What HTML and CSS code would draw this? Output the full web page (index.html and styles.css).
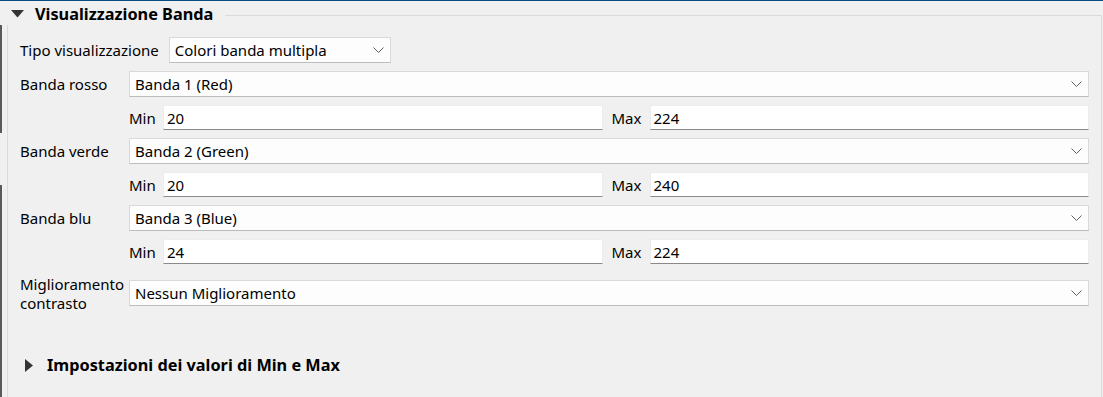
FILE: index.html
```html
<!DOCTYPE html>
<html lang="it">
<head>
  <meta charset="UTF-8" />
  <meta name="viewport" content="width=device-width, initial-scale=1.0" />
  <title>Visualizzazione Banda</title>
  <link rel="stylesheet" href="styles.css">
</head>
<body>
  <div class="screen">
    <div class="edge">
      <span class="edge-seg first"></span>
      <span class="edge-seg rest"></span>
    </div>

    <div class="group">
      <div class="group-head">
        <svg class="caret-down" width="13" height="8" viewBox="0 0 13 8"><polygon points="0,0 13,0 6.5,7.5" fill="#333"/></svg>
        <span class="group-title">Visualizzazione Banda</span>
        <span class="group-rule"></span>
      </div>

      <div class="group-body">
        <div class="type-row">
          <span class="label">Tipo visualizzazione</span>
          <div class="combo type-combo">
            <span>Colori banda multipla</span>
            <svg class="chevron" width="11" height="6" viewBox="0 0 11 6"><polyline points="0.5,0.5 5.5,5.5 10.5,0.5" fill="none" stroke="#606060" stroke-width="1"/></svg>
          </div>
        </div>

        <div class="bands">
          <span class="label">Banda rosso</span>
          <div class="combo">
            <span>Banda 1 (Red)</span>
            <svg class="chevron" width="11" height="6" viewBox="0 0 11 6"><polyline points="0.5,0.5 5.5,5.5 10.5,0.5" fill="none" stroke="#606060" stroke-width="1"/></svg>
          </div>
          <span></span>
          <div class="range">
            <span class="range-label min">Min</span>
            <div class="field">20</div>
            <span class="range-label max">Max</span>
            <div class="field">224</div>
          </div>

          <span class="label">Banda verde</span>
          <div class="combo">
            <span>Banda 2 (Green)</span>
            <svg class="chevron" width="11" height="6" viewBox="0 0 11 6"><polyline points="0.5,0.5 5.5,5.5 10.5,0.5" fill="none" stroke="#606060" stroke-width="1"/></svg>
          </div>
          <span></span>
          <div class="range">
            <span class="range-label min">Min</span>
            <div class="field">20</div>
            <span class="range-label max">Max</span>
            <div class="field">240</div>
          </div>

          <span class="label">Banda blu</span>
          <div class="combo">
            <span>Banda 3 (Blue)</span>
            <svg class="chevron" width="11" height="6" viewBox="0 0 11 6"><polyline points="0.5,0.5 5.5,5.5 10.5,0.5" fill="none" stroke="#606060" stroke-width="1"/></svg>
          </div>
          <span></span>
          <div class="range">
            <span class="range-label min">Min</span>
            <div class="field">24</div>
            <span class="range-label max">Max</span>
            <div class="field">224</div>
          </div>

          <span class="label two-line">Miglioramento<br>contrasto</span>
          <div class="combo">
            <span>Nessun Miglioramento</span>
            <svg class="chevron" width="11" height="6" viewBox="0 0 11 6"><polyline points="0.5,0.5 5.5,5.5 10.5,0.5" fill="none" stroke="#606060" stroke-width="1"/></svg>
          </div>
        </div>

        <div class="sub-head">
          <svg class="caret-right" width="8" height="13" viewBox="0 0 8 13"><polygon points="0,0 8,6.5 0,13" fill="#333"/></svg>
          <span class="sub-title">Impostazioni dei valori di Min e Max</span>
        </div>
      </div>
    </div>
  </div>
</body>
</html>
```

FILE: styles.css
```css
* { box-sizing: border-box; }
body {
  margin: 0;
  background: #f0f0f0;
  font-family: "Noto Sans", "Open Sans", sans-serif;
  font-size: 15px;
  color: #000;
  overflow: hidden;
}
.screen {
  display: flex;
  height: 397px;
  border-top: 1px solid #0c4d86;
}

/* splitter handle on the far left */
.edge {
  width: 2px;
  display: flex;
  flex-direction: column;
  padding-top: 24px;
}
.edge-seg { display: block; background: #5a5a5a; }
.edge-seg.first { height: 108px; margin-bottom: 52px; }
.edge-seg.rest { flex: 1; }

.group {
  flex: 1;
  margin-left: 5px;
  margin-right: 1px;
  display: flex;
  flex-direction: column;
}
.group-head {
  display: flex;
  align-items: center;
  height: 24px;
}
.caret-down { margin-left: 4px; margin-right: 11px; margin-top: 1px; }
.group-title { font-weight: bold; font-size: 16.3px; margin-top: 1px; }
.group-rule {
  flex: 1;
  align-self: stretch;
  margin-top: 14px;
  margin-left: 12px;
  border-top: 1px solid #dadada;
  border-right: 1px solid #dadada;
}
.group-body {
  flex: 1;
  border-left: 1px solid #dadada;
  border-right: 1px solid #dadada;
  padding: 12px 12px 0 12px;
}

.type-row {
  display: flex;
  align-items: center;
  gap: 10px;
}
.combo {
  display: flex;
  align-items: center;
  justify-content: space-between;
  height: 26px;
  padding: 0 6px 0 5px;
  background: #fdfdfd;
  border: 1px solid #d9d9d9;
  border-bottom-color: #bdbdbd;
  white-space: nowrap;
}
.type-combo { width: 222px; }
.chevron { flex: none; }

.bands {
  display: grid;
  grid-template-columns: 109px 1fr;
  row-gap: 8px;
  align-items: center;
  margin-top: 8px;
}
.label { white-space: nowrap; }
.two-line { line-height: 19px; padding-top: 3px; }

.range {
  display: flex;
  align-items: center;
  gap: 9px;
}
.range-label { flex: none; white-space: nowrap; }
.range-label.min { width: 25px; }
.range-label.max { width: 29px; }
.field {
  flex: 1;
  height: 25px;
  display: flex;
  align-items: center;
  padding-left: 3px;
  background: #fff;
  border: 1px solid #ececec;
  border-bottom-color: #8a8a8a;
}

.sub-head {
  display: flex;
  align-items: center;
  height: 20px;
  margin-top: 42px;
}
.caret-right { margin-left: 5px; margin-right: 14px; }
.sub-title { font-weight: bold; font-size: 16.3px; }
```
